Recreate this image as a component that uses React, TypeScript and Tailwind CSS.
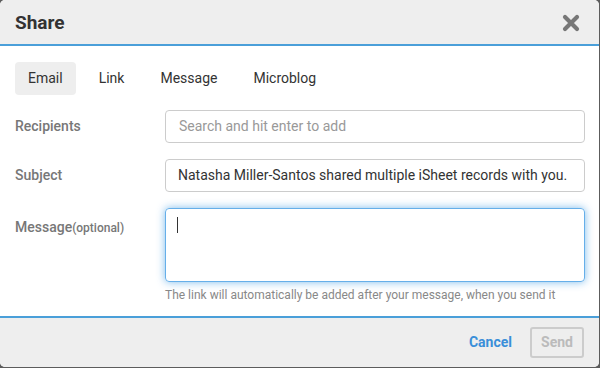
import React from "react";

export default function App() {
  return (
    <div
      className="w-[600px] h-[368px] bg-[#5c5c5c] overflow-hidden"
      style={{ fontFamily: "Roboto, 'Liberation Sans', sans-serif" }}
    >
      <div className="w-[599px] h-[367px] bg-white rounded-[5px] overflow-hidden flex flex-col">
        <div className="h-[46px] shrink-0 bg-[#eeeeee] border-b-2 border-[#4a9fd9] flex items-center justify-between pl-[15px] pr-[19px]">
          <div className="text-[19px] font-bold text-[#333] leading-none pt-[1px]">Share</div>
          <svg width="18" height="18" viewBox="0 0 18 18" className="mt-[1px]">
            <path d="M3 3 L15 15 M15 3 L3 15" stroke="#777" strokeWidth="4.2" strokeLinecap="round" />
          </svg>
        </div>
        <div className="flex-1 pl-[15px] pr-[14px] pt-[16px]">
          <div className="flex gap-[10px] text-[14px] text-[#333]">
            <div className="h-[33px] px-[13px] flex items-center bg-[#eeeeee] rounded-[4px]">Email</div>
            <div className="h-[33px] px-[13px] flex items-center">Link</div>
            <div className="h-[33px] px-[13px] flex items-center">Message</div>
            <div className="h-[33px] px-[13px] flex items-center">Microblog</div>
          </div>
          <div className="mt-[15px] flex items-center">
            <div className="w-[150px] text-[14px] font-medium text-[#777]">Recipients</div>
            <div className="flex-1 h-[33px] border border-[#ccc] rounded-[4px] flex items-center px-[13px] text-[14px] text-[#999]">
              Search and hit enter to add
            </div>
          </div>
          <div className="mt-[16px] flex items-center">
            <div className="w-[150px] text-[14px] font-medium text-[#777]">Subject</div>
            <div className="flex-1 h-[33px] border border-[#ccc] rounded-[4px] flex items-center px-[12px] text-[14px] text-[#333] whitespace-nowrap">
              Natasha Miller-Santos shared multiple iSheet records with you.
            </div>
          </div>
          <div className="mt-[16px] flex items-start">
            <div className="w-[150px] pt-[9px] text-[14px] font-medium text-[#777] whitespace-nowrap">
              Message<span className="text-[12px]">(optional)</span>
            </div>
            <div className="flex-1">
              <div className="h-[74px] border border-[#66afe9] rounded-[4px] shadow-[0_0_8px_rgba(102,175,233,0.85)] pl-[11px] pt-[8px]">
                <div className="w-[1px] h-[16px] bg-[#333]" />
              </div>
              <div className="mt-[4px] text-[12px] text-[#888] whitespace-nowrap">
                The link will automatically be added after your message, when you send it
              </div>
            </div>
          </div>
        </div>
        <div className="h-[51px] shrink-0 bg-[#eeeeee] border-t-2 border-[#4a9fd9] flex items-center justify-end pr-[15px] gap-[18px]">
          <div className="text-[14px] font-bold text-[#3a8fd9]">Cancel</div>
          <div className="h-[31px] w-[54px] border-2 border-[#cccccc] rounded-[3px] flex items-center justify-center text-[14px] font-bold text-[#bbb]">
            Send
          </div>
        </div>
      </div>
    </div>
  );
}
